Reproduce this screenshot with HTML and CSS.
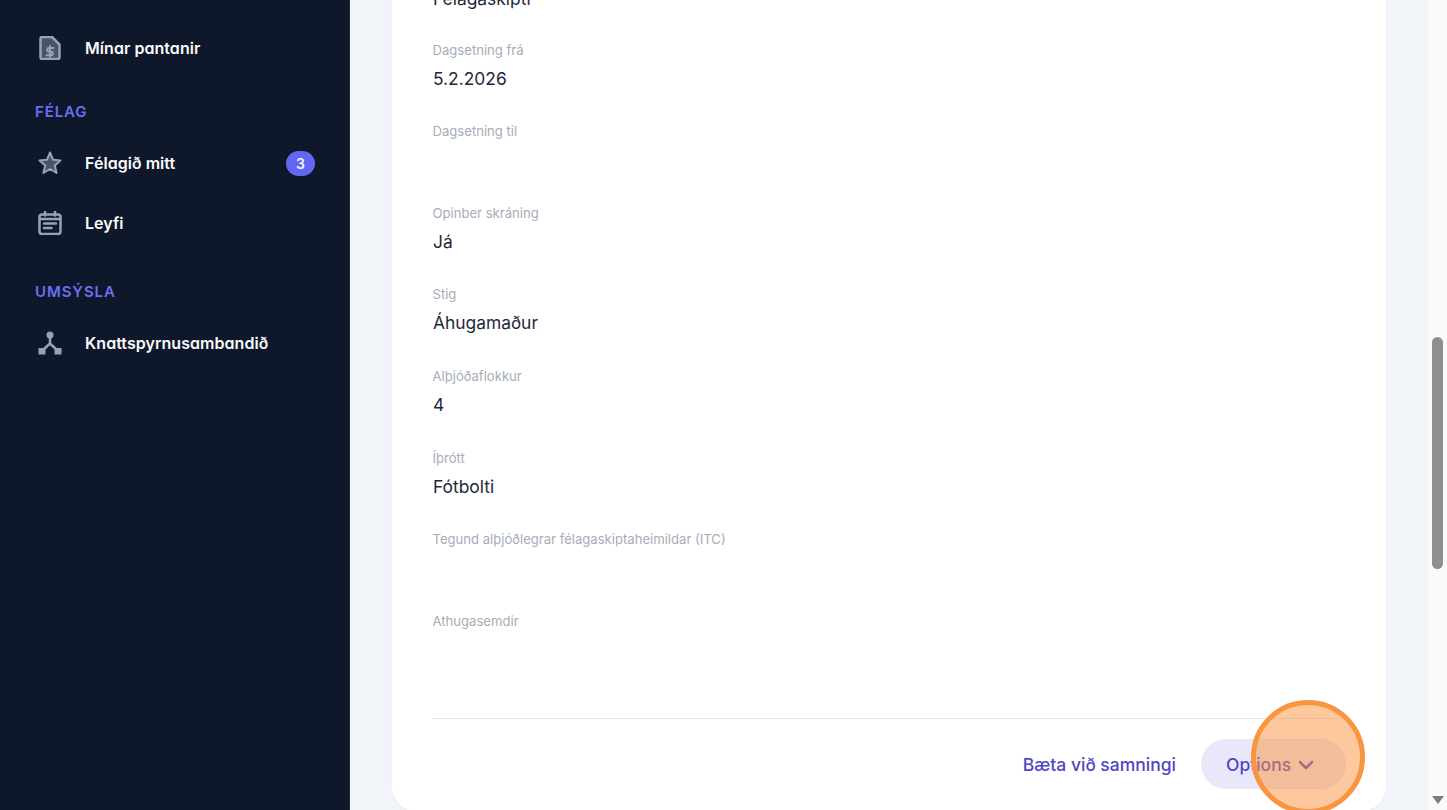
FILE: index.html
```html
<!DOCTYPE html>
<html lang="is">
<head>
<meta charset="utf-8">
<title>Samningar</title>
<link rel="stylesheet" href="styles.css">
</head>
<body>
<div class="app">
  <aside class="sidebar">
    <a class="nav-item">
      <svg class="nav-icon" viewBox="0 0 24 24"><path class="duo" d="M4 1h10l7.500 7.500v13a1.500 1.500 0 0 1-1.500 1.500H4a1.500 1.500 0 0 1-1.500-1.500V2.500A1.500 1.500 0 0 1 4 1z"/><path class="line wide" d="M4 1h10l7.500 7.500v13a1.500 1.500 0 0 1-1.500 1.500H4a1.500 1.500 0 0 1-1.500-1.500V2.500A1.500 1.500 0 0 1 4 1z"/><path class="line" d="M15.500 12h-4.500a1.800 1.800 0 0 0 0 3.600h2a1.800 1.800 0 0 1 0 3.600H8.500M12 10v11"/></svg>
      <span class="nav-label">Mínar pantanir</span>
    </a>
    <div class="nav-heading nav-heading-first">FÉLAG</div>
    <a class="nav-item">
      <svg class="nav-icon" viewBox="0 0 24 24"><path class="duo" d="M12 1.500l3 7.200 7.500.7-5.700 5 1.800 7.600-6.600-4-6.600 4 1.800-7.600-5.700-5 7.500-.7z"/><path class="line" d="M12 1.500l3 7.200 7.500.7-5.700 5 1.800 7.600-6.600-4-6.600 4 1.800-7.600-5.700-5 7.500-.7z"/></svg>
      <span class="nav-label">Félagið mitt</span>
      <span class="badge">3</span>
    </a>
    <a class="nav-item">
      <svg class="nav-icon" viewBox="0 0 24 24"><rect class="line wide" x="1.500" y="3.500" width="21" height="19.500" rx="2.500"/><path class="line wide" d="M7 0.500v4M17 0.500v4M1.500 8h21M6 12.500h12M6 17h7.500"/></svg>
      <span class="nav-label">Leyfi</span>
    </a>
    <div class="nav-heading">UMSÝSLA</div>
    <a class="nav-item">
      <svg class="nav-icon" viewBox="0 0 24 24"><circle class="fill" cx="12" cy="4" r="3.500"/><rect class="fill" x="0.500" y="17" width="7" height="6.500"/><rect class="fill" x="16.500" y="17" width="7" height="6.500"/><path class="line thick" d="M12 6v6.500L5 19M12 12.500L19 19"/></svg>
      <span class="nav-label">Knattspyrnusambandið</span>
    </a>
  </aside>
  <main class="main">
    <section class="card">
      <div class="field field-top"><div class="value">Félagaskipti</div></div>
      <div class="field"><div class="label">Dagsetning frá</div><div class="value">5.2.2026</div></div>
      <div class="field"><div class="label">Dagsetning til</div><div class="value">&nbsp;</div></div>
      <div class="field"><div class="label">Opinber skráning</div><div class="value">Já</div></div>
      <div class="field"><div class="label">Stig</div><div class="value">Áhugamaður</div></div>
      <div class="field"><div class="label">Alþjóðaflokkur</div><div class="value">4</div></div>
      <div class="field"><div class="label">Íþrótt</div><div class="value">Fótbolti</div></div>
      <div class="field"><div class="label">Tegund alþjóðlegrar félagaskiptaheimildar (ITC)</div><div class="value">&nbsp;</div></div>
      <div class="field"><div class="label">Athugasemdir</div><div class="value">&nbsp;</div></div>
      <div class="actions">
        <a class="link-action">Bæta við samningi</a>
        <button class="options-btn">Options
          <svg class="chevron" viewBox="0 0 16 10"><path d="M2 2l6 6 6-6"/></svg>
        </button>
      </div>
      <div class="highlight"></div>
    </section>
  </main>
  <div class="scrollbar">
    <div class="thumb"></div>
    <div class="arrow"></div>
  </div>
</div>
</body>
</html>
```
FILE: styles.css
```css
* { box-sizing: border-box; }
html, body { margin: 0; height: 810px; overflow: hidden; }
body { font-family: Inter, "Liberation Sans", sans-serif; background: #f1f5f9; }
.app { display: flex; height: 810px; overflow: hidden; }

.sidebar {
  width: 350px;
  flex: none;
  background: #0f172a;
  border-right: 1px solid #1e293b;
  padding: 18px 35px 0 35px;
  color: #fff;
}
.nav-item { display: flex; align-items: center; height: 60px; }
.nav-icon { width: 24px; height: 24px; flex: none; margin-left: 3px; margin-right: 23px; }
.nav-icon .duo { fill: #475569; stroke: none; }
.nav-icon .line { fill: none; stroke: #94a3b8; stroke-width: 2; stroke-linejoin: round; stroke-linecap: round; }
.nav-icon .wide { stroke-width: 2.500; }
.nav-icon .fill { fill: #94a3b8; }
.nav-icon .thick { stroke-width: 2.500; stroke-linecap: butt; }
.nav-label {
  font-size: 16px;
  font-weight: 600;
  letter-spacing: 0.05px;
  font-feature-settings: "cv11" 1;
  color: #f8fafc;
  white-space: nowrap;
}
.badge {
  margin-left: auto;
  width: 29px; height: 25px;
  border-radius: 13px;
  background: #6366f1;
  color: #f1f5f9;
  font-size: 14px; font-weight: 600;
  display: flex; align-items: center; justify-content: center;
  position: relative; left: 1px;
}
.nav-heading {
  height: 20px;
  margin-top: 29px;
  margin-bottom: 11px;
  line-height: 20px;
  font-size: 15px;
  font-weight: 600;
  letter-spacing: 0.9px;
  color: #6a6ff2;
}
.nav-heading-first { margin-top: 24px; }

.main { flex: 1; min-width: 0; padding: 0 41px 0 42px; }
.card {
  position: relative;
  margin-top: -17px;
  width: 994px;
  height: 828px;
  background: #fff;
  border-radius: 0 0 24px 24px;
  padding: 0 41px;
  box-shadow: 0 1px 2px rgba(15, 23, 42, 0.05);
  overflow: hidden;
}
.field { height: 81.600px; padding-top: 14px; }
.field-top { height: 42.600px; padding-top: 2px; }
.label { font-size: 13.100px; line-height: 20px; color: #a6adb8; margin-left: -0.500px; }
.value { font-size: 17.400px; line-height: 28px; color: #1e293b; margin-top: 5px; }
.field-top .value { margin-top: 0; }
.actions {
  position: absolute;
  left: 40px; right: 40px; top: 735px;
  height: 93px;
  border-top: 1px solid #e5e7eb;
  display: flex; align-items: flex-start; justify-content: flex-end;
  gap: 25px;
  padding-top: 20px;
}
.link-action { font-size: 17.500px; font-weight: 500; line-height: 52px; color: #4f46c5; }
.options-btn {
  width: 145px; height: 50px;
  border: 0; border-radius: 25px;
  background: #e9e8fb;
  color: #4f46c5;
  font: 500 17.500px Inter, "Liberation Sans", sans-serif;
  display: flex; align-items: center;
  padding: 1px 0 0 25px;
  gap: 7px;
}
.chevron { width: 16px; height: 10px; fill: none; stroke: currentColor; stroke-width: 2.500; stroke-linecap: round; stroke-linejoin: round; }
.highlight {
  position: absolute;
  left: 859px; top: 717px;
  width: 114px; height: 114px;
  border-radius: 50%;
  background: rgba(251, 146, 60, 0.5);
  border: 5px solid #f9953f;
}
.scrollbar {
  position: absolute;
  left: 1428px; top: 0;
  width: 19px; height: 810px;
  background: #fafafa;
}
.thumb {
  position: absolute;
  left: 4px; top: 337px;
  width: 11px; height: 232px;
  border-radius: 6px;
  background: #8f8f8f;
}
.arrow {
  position: absolute;
  left: 4px; top: 796px;
  width: 0; height: 0;
  border-left: 6px solid transparent;
  border-right: 6px solid transparent;
  border-top: 8px solid #7d7d7d;
}
```
